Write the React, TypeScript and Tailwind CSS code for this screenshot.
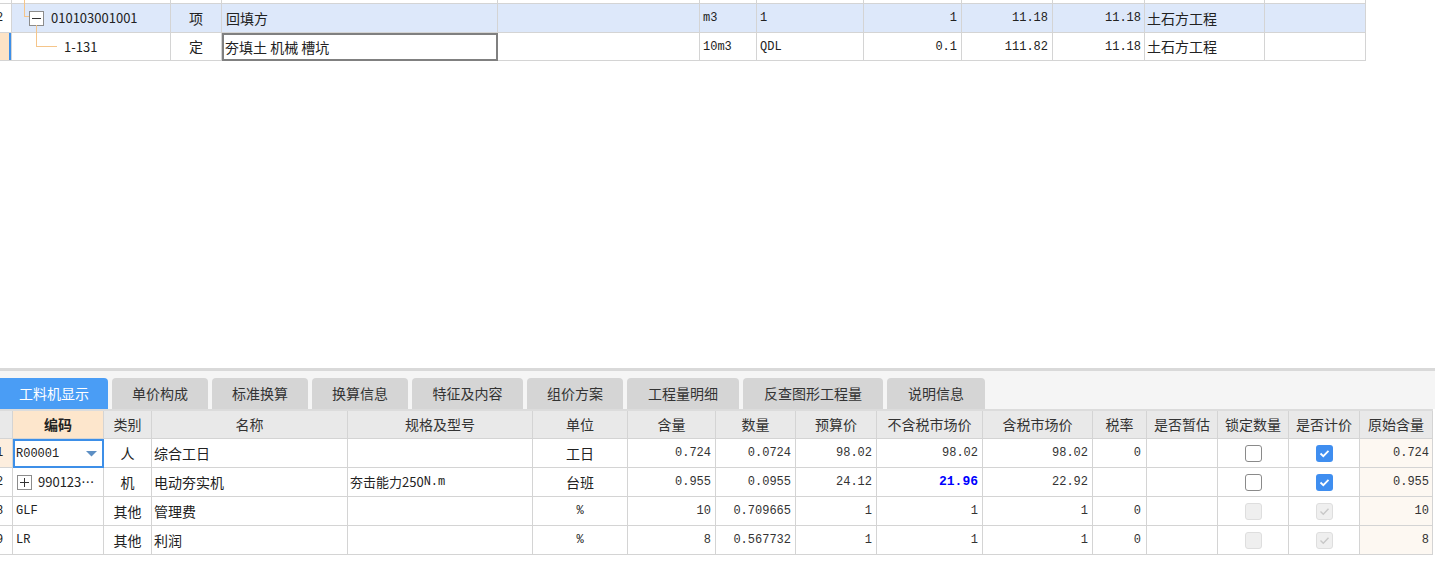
import React from "react";

const cjk = "font-['Noto_Sans_CJK_SC',sans-serif]";
const mono = "font-['Liberation_Mono','Noto_Sans_CJK_SC',monospace]";

const topW = [
  "w-[12px]",
  "w-[159px]",
  "w-[51px]",
  "w-[276px]",
  "w-[202px]",
  "w-[57px]",
  "w-[107px]",
  "w-[98px]",
  "w-[91px]",
  "w-[92px]",
  "w-[120px]",
  "w-[101px]",
];

const botW = [
  "w-[13px]",
  "w-[91px]",
  "w-[48px]",
  "w-[196px]",
  "w-[185px]",
  "w-[95px]",
  "w-[88px]",
  "w-[80px]",
  "w-[81px]",
  "w-[106px]",
  "w-[110px]",
  "w-[54px]",
  "w-[71px]",
  "w-[71px]",
  "w-[71px]",
  "w-[73px]",
];

const base = "shrink-0 h-full flex items-center overflow-hidden whitespace-nowrap";
const cell = `${base} border-r border-b border-[#d4d4d4]`;
const editGray = `${base} border-2 border-[#808080]`;
const editBlue = `${base} border-2 border-[#3d8fe8]`;

function Check({ state }: { state: "empty" | "checked" | "disabled" | "disabledChecked" }) {
  if (state === "checked") {
    return (
      <div className="w-[17px] h-[17px] rounded-[3px] bg-[#3f8ef0] flex items-center justify-center">
        <svg width="11" height="9" viewBox="0 0 11 9">
          <path d="M1.5 4.5 L4.3 7.2 L9.5 1.8" fill="none" stroke="#fff" strokeWidth="1.8" />
        </svg>
      </div>
    );
  }
  if (state === "disabledChecked") {
    return (
      <div className="w-[17px] h-[17px] rounded-[3px] bg-[#efefef] border border-[#dedede] flex items-center justify-center">
        <svg width="11" height="9" viewBox="0 0 11 9">
          <path d="M1.5 4.5 L4.3 7.2 L9.5 1.8" fill="none" stroke="#c8c8c8" strokeWidth="1.4" />
        </svg>
      </div>
    );
  }
  if (state === "disabled") {
    return <div className="w-[17px] h-[17px] rounded-[3px] bg-[#efefef] border border-[#dedede]" />;
  }
  return <div className="w-[17px] h-[17px] rounded-[3px] bg-white border border-[#8a8a8a]" />;
}

function TopTable() {
  return (
    <div className="w-[1366px] text-[#222]">
      <div className="flex h-[4px]">
        {topW.map((w, i) => (
          <div key={i} className={`${w} ${cell} relative`}>
            {i === 1 && <span className="absolute left-[12px] top-0 w-px h-[4px] bg-[#f5c58a]" />}
          </div>
        ))}
      </div>
      <div className="flex h-[29px] bg-[#dde8fa]">
        <div className={`${topW[0]} ${cell} bg-white ${mono} text-[12px]`}>
          <span className="-ml-[4px]">2</span>
        </div>
        <div className={`${topW[1]} ${cell} relative overflow-visible`}>
          <span className="absolute left-[12px] -top-px w-px h-[13px] bg-[#f5c58a]" />
          <span className="absolute left-[12px] top-[12px] w-[5px] h-px bg-[#f5c58a]" />
          <span className="ml-[17px] w-[15px] h-[15px] border border-[#8c8c8c] bg-white flex items-center justify-center shrink-0">
            <span className="w-[9px] h-px bg-[#333]" />
          </span>
          <span className="absolute left-[24px] top-[21px] w-px h-[22px] bg-[#f5c58a] z-10" />
          <span className={`ml-[7px] ${cjk} text-[13px]`}>010103001001</span>
        </div>
        <div className={`${topW[2]} ${cell} justify-center ${cjk} text-[14px]`}>项</div>
        <div className={`${topW[3]} ${cell} ${cjk} text-[14px] pl-[4px]`}>回填方</div>
        <div className={`${topW[4]} ${cell}`} />
        <div className={`${topW[5]} ${cell} ${mono} text-[12px] pl-[3px]`}>m3</div>
        <div className={`${topW[6]} ${cell} ${mono} text-[12px] pl-[3px]`}>1</div>
        <div className={`${topW[7]} ${cell} ${mono} text-[12px] justify-end pr-[4px]`}>1</div>
        <div className={`${topW[8]} ${cell} ${mono} text-[12px] justify-end pr-[4px]`}>11.18</div>
        <div className={`${topW[9]} ${cell} ${mono} text-[12px] justify-end pr-[3px]`}>11.18</div>
        <div className={`${topW[10]} ${cell} ${cjk} text-[14px] pl-[2px]`}>土石方工程</div>
        <div className={`${topW[11]} ${cell}`} />
      </div>
      <div className="flex h-[28px] bg-white">
        <div className={`${topW[0]} ${cell} bg-[#fde3c6] relative`}>
          <span className="absolute right-0 top-0 w-[2px] h-full bg-[#3d8fe8]" />
        </div>
        <div className={`${topW[1]} ${cell} relative`}>
          <span className="absolute left-[24px] top-0 w-px h-[14px] bg-[#f5c58a]" />
          <span className="absolute left-[24px] top-[13px] w-[21px] h-px bg-[#f5c58a]" />
          <span className={`ml-[52px] ${cjk} text-[13px]`}>1-131</span>
        </div>
        <div className={`${topW[2]} ${cell} justify-center ${cjk} text-[14px]`}>定</div>
        <div className={`${topW[3]} ${editGray} ${cjk} text-[14px] pl-[1px]`}>夯填土 机械 槽坑</div>
        <div className={`${topW[4]} ${cell}`} />
        <div className={`${topW[5]} ${cell} ${mono} text-[12px] pl-[3px]`}>10m3</div>
        <div className={`${topW[6]} ${cell} ${mono} text-[12px] pl-[3px]`}>QDL</div>
        <div className={`${topW[7]} ${cell} ${mono} text-[12px] justify-end pr-[4px]`}>0.1</div>
        <div className={`${topW[8]} ${cell} ${mono} text-[12px] justify-end pr-[4px]`}>111.82</div>
        <div className={`${topW[9]} ${cell} ${mono} text-[12px] justify-end pr-[3px]`}>11.18</div>
        <div className={`${topW[10]} ${cell} ${cjk} text-[14px] pl-[2px]`}>土石方工程</div>
        <div className={`${topW[11]} ${cell}`} />
      </div>
    </div>
  );
}

const tabs = ["工料机显示", "单价构成", "标准换算", "换算信息", "特征及内容", "组价方案", "工程量明细", "反查图形工程量", "说明信息"];
const tabW = ["w-[108px]", "w-[96px]", "w-[96px]", "w-[96px]", "w-[111px]", "w-[96px]", "w-[112px]", "w-[140px]", "w-[98px]"];

const headers = ["", "编码", "类别", "名称", "规格及型号", "单位", "含量", "数量", "预算价", "不含税市场价", "含税市场价", "税率", "是否暂估", "锁定数量", "是否计价", "原始含量"];

type Row = {
  num: string;
  code: string;
  kind: string;
  name: string;
  spec: string;
  unit: string;
  vals: string[];
  rate: string;
  lock: "empty" | "disabled";
  price: "checked" | "disabledChecked";
  orig: string;
};

const rows: Row[] = [
  { num: "1", code: "R00001", kind: "人", name: "综合工日", spec: "", unit: "工日", vals: ["0.724", "0.0724", "98.02", "98.02", "98.02"], rate: "0", lock: "empty", price: "checked", orig: "0.724" },
  { num: "2", code: "990123…", kind: "机", name: "电动夯实机", spec: "夯击能力250N.m", unit: "台班", vals: ["0.955", "0.0955", "24.12", "21.96", "22.92"], rate: "", lock: "empty", price: "checked", orig: "0.955" },
  { num: "8", code: "GLF", kind: "其他", name: "管理费", spec: "", unit: "%", vals: ["10", "0.709665", "1", "1", "1"], rate: "0", lock: "disabled", price: "disabledChecked", orig: "10" },
  { num: "9", code: "LR", kind: "其他", name: "利润", spec: "", unit: "%", vals: ["8", "0.567732", "1", "1", "1"], rate: "0", lock: "disabled", price: "disabledChecked", orig: "8" },
];

function BottomPanel() {
  return (
    <div className="w-full">
      <div className="h-[3px] bg-[#d9d9d9]" />
      <div className="bg-[#f5f5f5] pt-[7px] flex gap-[4px]">
        {tabs.map((t, i) => (
          <div
            key={t}
            className={`${tabW[i]} h-[31px] flex items-center justify-center ${cjk} text-[14px] ${
              i === 0 ? "bg-[#4a9df5] text-white rounded-tr-[4px]" : "bg-[#d5d5d5] text-[#333] rounded-t-[4px]"
            }`}
          >
            {t}
          </div>
        ))}
      </div>
      <div className="w-[1433px] border-t-2 border-[#dcdcdc] text-[#222]">
        <div className="flex h-[28px] bg-[#e9e9e9]">
          {headers.map((h, i) => (
            <div
              key={i}
              className={`${botW[i]} ${cell} justify-center ${cjk} text-[14px] ${
                i === 1 ? "bg-[#fde6cc] font-bold text-[#222]" : "text-[#333]"
              }`}
            >
              {h}
            </div>
          ))}
        </div>
        {rows.map((r, ri) => (
          <div key={ri} className="flex h-[29px] bg-white">
            <div className={`${botW[0]} ${cell} ${ri === 0 ? "bg-[#fdeede]" : ""} ${mono} text-[12px]`}>
              <span className="-ml-[4px]">{r.num}</span>
            </div>
            {ri === 0 ? (
              <div className={`${botW[1]} ${editBlue} ${mono} text-[12px] pl-[1px] justify-between pr-[5px]`}>
                <span>{r.code}</span>
                <svg width="11" height="6" viewBox="0 0 11 6">
                  <path d="M0 0 H11 L5.5 5.5 Z" fill="#5d8fc4" />
                </svg>
              </div>
            ) : ri === 1 ? (
              <div className={`${botW[1]} ${cell} pl-[4px]`}>
                <span className="w-[15px] h-[15px] border border-[#8c8c8c] flex items-center justify-center shrink-0 relative">
                  <span className="w-[9px] h-px bg-[#333]" />
                  <span className="absolute w-px h-[9px] bg-[#333]" />
                </span>
                <span className={`ml-[6px] ${cjk} text-[13px]`}>{r.code}</span>
              </div>
            ) : (
              <div className={`${botW[1]} ${cell} ${mono} text-[12px] pl-[3px]`}>{r.code}</div>
            )}
            <div className={`${botW[2]} ${cell} justify-center ${cjk} text-[14px]`}>{r.kind}</div>
            <div className={`${botW[3]} ${cell} ${cjk} text-[14px] pl-[2px]`}>{r.name}</div>
            <div className={`${botW[4]} ${cell} ${cjk} text-[13px] pl-[2px]`}>
              {r.spec && (
                <>
                  夯击能力<span>250</span>
                  <span className={`${mono} text-[12px]`}>N.m</span>
                </>
              )}
            </div>
            <div className={`${botW[5]} ${cell} justify-center ${r.unit === "%" ? `${mono} text-[12px]` : `${cjk} text-[14px]`}`}>
              {r.unit}
            </div>
            {r.vals.map((v, vi) => (
              <div
                key={vi}
                className={`${botW[6 + vi]} ${cell} justify-end pr-[4px] ${mono} text-[12px] ${
                  ri === 1 && vi === 3 ? "text-[#0000ff] font-bold text-[13px]" : "text-[#333]"
                }`}
              >
                {v}
              </div>
            ))}
            <div className={`${botW[11]} ${cell} justify-end pr-[5px] ${mono} text-[12px] text-[#333]`}>{r.rate}</div>
            <div className={`${botW[12]} ${cell}`} />
            <div className={`${botW[13]} ${cell} justify-center`}>
              <Check state={r.lock} />
            </div>
            <div className={`${botW[14]} ${cell} justify-center`}>
              <Check state={r.price} />
            </div>
            <div className={`${botW[15]} ${cell} bg-[#fdf8f2] justify-end pr-[3px] ${mono} text-[12px] text-[#333]`}>
              {r.orig}
            </div>
          </div>
        ))}
      </div>
    </div>
  );
}

export default function App() {
  return (
    <div className="w-[1435px] h-[571px] bg-white overflow-hidden flex flex-col">
      <TopTable />
      <div className="h-[307px] shrink-0" />
      <BottomPanel />
    </div>
  );
}
